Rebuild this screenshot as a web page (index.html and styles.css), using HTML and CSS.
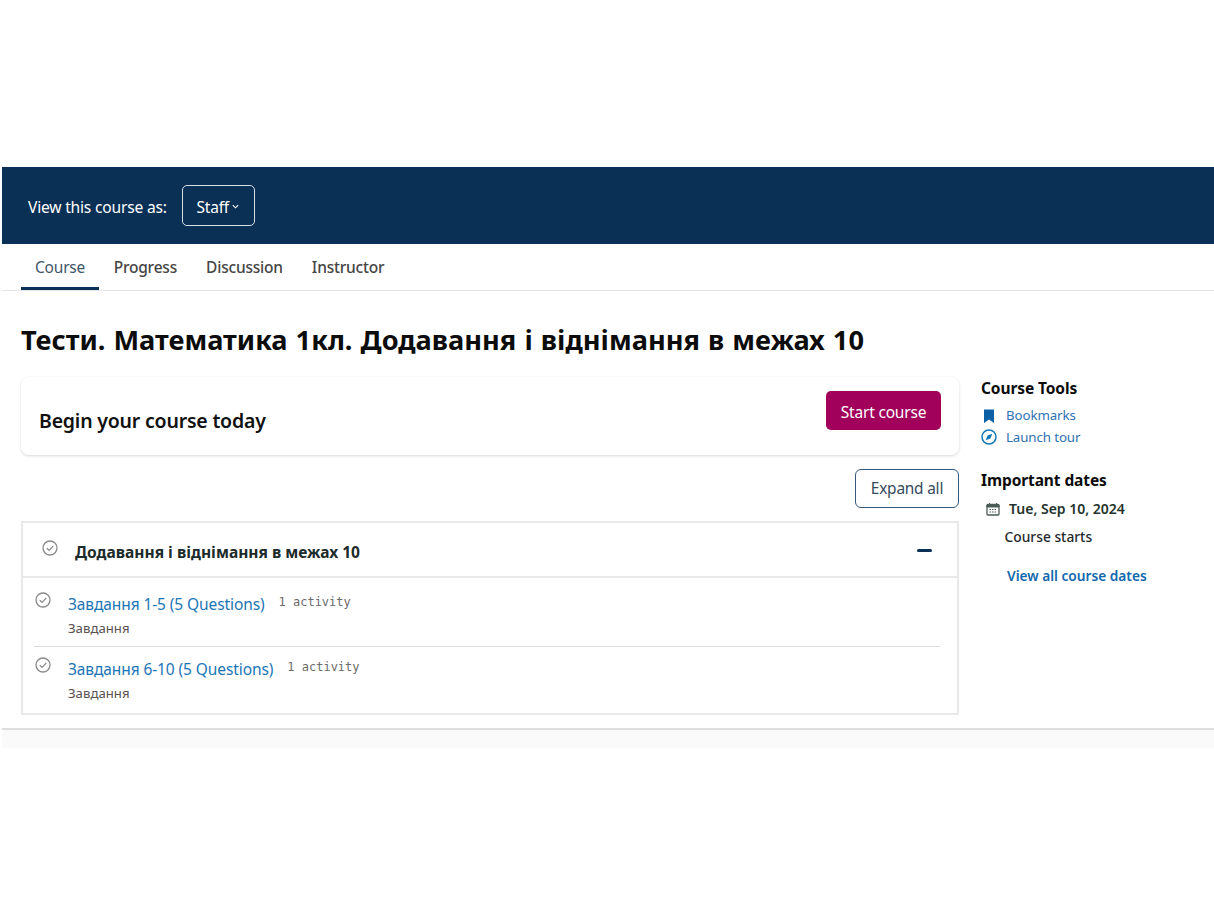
FILE: index.html
```html
<!DOCTYPE html>
<html lang="uk">
<head>
<meta charset="utf-8">
<title>Course</title>
<link rel="stylesheet" href="styles.css">
</head>
<body>
<div class="page">
  <div class="banner">
    <span class="banner-label">View this course as:</span>
    <button class="staff-btn">Staff<svg class="chev" viewBox="0 0 10 10" width="9" height="9"><path d="M2 3.5 5 6.5 8 3.500" fill="none" stroke="#fff" stroke-width="1.2"/></svg></button>
  </div>
  <nav class="tabs">
    <a class="tab active">Course</a>
    <a class="tab">Progress</a>
    <a class="tab">Discussion</a>
    <a class="tab">Instructor</a>
  </nav>
  <main class="content">
    <h1 class="title">Тести. Математика 1кл. Додавання і віднімання в межах 10</h1>
    <div class="columns">
      <div class="main-col">
        <div class="begin-card">
          <h2 class="begin-title">Begin your course today</h2>
          <button class="start-btn">Start course</button>
        </div>
        <div class="expand-row"><button class="expand-btn">Expand all</button></div>
        <section class="outline">
          <header class="section-head">
            <svg class="check check-head" viewBox="0 0 16 16" width="16" height="16"><circle cx="8" cy="8" r="7" fill="none" stroke="#8a8a8a" stroke-width="1.3"/><path d="M4.8 8.2 7.1 10.4 11.3 5.9" fill="none" stroke="#8a8a8a" stroke-width="1.3"/></svg>
            <span class="section-title">Додавання і віднімання в межах 10</span>
            <span class="minus"></span>
          </header>
          <ul class="units">
            <li class="unit">
              <svg class="check" viewBox="0 0 16 16" width="16" height="16"><circle cx="8" cy="8" r="7" fill="none" stroke="#8a8a8a" stroke-width="1.3"/><path d="M4.8 8.2 7.1 10.4 11.3 5.9" fill="none" stroke="#8a8a8a" stroke-width="1.3"/></svg>
              <div class="unit-body">
                <div class="unit-line"><a class="unit-link">Завдання 1-5 (5 Questions)</a><span class="count">1 activity</span></div>
                <div class="unit-sub">Завдання</div>
              </div>
            </li>
            <li class="unit">
              <svg class="check" viewBox="0 0 16 16" width="16" height="16"><circle cx="8" cy="8" r="7" fill="none" stroke="#8a8a8a" stroke-width="1.3"/><path d="M4.8 8.2 7.1 10.4 11.3 5.9" fill="none" stroke="#8a8a8a" stroke-width="1.3"/></svg>
              <div class="unit-body">
                <div class="unit-line"><a class="unit-link">Завдання 6-10 (5 Questions)</a><span class="count">1 activity</span></div>
                <div class="unit-sub">Завдання</div>
              </div>
            </li>
          </ul>
        </section>
      </div>
      <aside class="side">
        <h3 class="side-title">Course Tools</h3>
        <a class="tool"><svg class="tool-icon" viewBox="0 0 16 16" width="16" height="16"><path d="M3 1.5h10v13.5L8 11.600 3 15z" fill="#0a5fa5"/></svg>Bookmarks</a>
        <a class="tool"><svg class="tool-icon" viewBox="0 0 16 16" width="16" height="16"><circle cx="8" cy="8" r="7" fill="none" stroke="#1277b5" stroke-width="1.5"/><path d="M11.3 4.7 9.4 9.4 4.7 11.3 6.6 6.6z" fill="#1277b5"/></svg>Launch tour</a>
        <h3 class="side-title dates-title">Important dates</h3>
        <div class="date-row"><svg class="cal" viewBox="0 0 14 14" width="14" height="14"><path d="M2 2.500h10a1 1 0 0 1 1 1v8.500a1 1 0 0 1-1 1H2a1 1 0 0 1-1-1V3.500a1 1 0 0 1 1-1z" fill="none" stroke="#4a5a55" stroke-width="1.3"/><path d="M1 3h12v2H1zM3.500 1v2M10.500 1v2" fill="#4a5a55" stroke="#4a5a55"/><path d="M3.500 7.500h7M3.500 10h7" stroke="#4a5a55" stroke-width="1.200" stroke-dasharray="1.500 1"/></svg><span>Tue, Sep 10, 2024</span></div>
        <div class="date-label">Course starts</div>
        <a class="all-dates">View all course dates</a>
      </aside>
    </div>
  </main>
  <div class="footer-band"></div>
</div>
</body>
</html>
```
FILE: styles.css
```css
* { box-sizing: border-box; }
html, body { margin: 0; background: #fff; }
body { font-family: "Noto Sans", "Open Sans", sans-serif; color: #1a1a1a; }
.page { padding: 167px 0 0 2px; }
.banner {
  height: 77px; background: #0a3055; display: flex; align-items: center;
  padding-left: 26px; color: #fff;
}
.banner-label { font-size: 15.600px; letter-spacing: -0.2px; padding-top: 2px; }
.staff-btn {
  margin-left: 15px; width: 73px; height: 41px; border: 1px solid #d8dfe6; border-radius: 5px;
  background: transparent; color: #fff; font: inherit; font-size: 15.500px; letter-spacing: -0.2px;
  display: flex; align-items: center; justify-content: center; padding: 2px 0 0;
}
.chev { margin-left: 2px; }
.tabs {
  height: 47px; display: flex; padding-left: 19px;
  border-bottom: 1px solid #e6e6e6;
}
.tab {
  font-size: 15.500px; color: #454545; padding: 12px 14.500px 0; height: 46px;
  letter-spacing: -0.2px; font-weight: 500;
}
.tab.active { color: #3f5568; border-bottom: 3px solid #0a3055; font-weight: 400; padding: 12px 14px 0; }
.content { padding: 0 0 13px 19px; }
.title { font-size: 27.200px; word-spacing: 1px; font-weight: 700; color: #0c0c0c; margin: 30px 0 18px; line-height: 38px; }
.columns { display: flex; }
.main-col { width: 938px; }
.begin-card {
  height: 78px; border-radius: 8px; background: #fff; box-shadow: 0 1px 3px rgba(0,0,0,.16);
  display: flex; justify-content: space-between; padding: 14px 18px 0 18px;
}
.begin-title { font-size: 19.500px; font-weight: 600; margin: 16px 0 0; color: #111; letter-spacing: -0.2px; }
.start-btn {
  width: 115px; height: 39px; background: #a1005b; color: #fff; border: 0; border-radius: 5px;
  font: inherit; font-size: 15.500px; letter-spacing: -0.2px; padding: 2px 0 0;
}
.expand-row { display: flex; justify-content: flex-end; margin-top: 14px; }
.expand-btn {
  width: 104px; height: 39px; background: #fff; border: 1px solid #35587c; border-radius: 6px;
  color: #34495c; font: inherit; font-size: 15.400px; letter-spacing: -0.2px; padding: 0;
}
.outline { margin-top: 13px; border: 2px solid #e9e9e9; }
.section-head { height: 55px; display: flex; align-items: center; padding-left: 19px; border-bottom: 2px solid #e9e9e9; position: relative; }
.check-head { margin-top: -4px; }
.section-title { margin: 4px 0 0 17px; font-size: 15.550px; font-weight: 700; color: #1b2a2a; }
.minus { position: absolute; right: 25px; top: 26px; width: 15px; height: 3px; background: #0a3055; border-radius: 2px; }
.units { list-style: none; margin: 0; padding: 0 17px 0 11px; }
.unit { height: 67px; display: flex; border-top: 1px solid #dcdcdc; padding-top: 10px; }
.unit:first-child { border-top: 0; height: 68px; padding-top: 14px; }
.check { flex: none; }
.unit .check { margin-left: 1px; }
.unit-body { margin-left: 17px; margin-top: 1px; }
.unit-line { display: flex; }
.unit-link { font-size: 15.500px; color: #1c75b5; line-height: 22px; letter-spacing: -0.1px; }
.count { font-family: "DejaVu Sans Mono", monospace; font-size: 12px; color: #6b6b6b; margin: 1px 0 0 14px; line-height: 16px; }
.unit-sub { font-size: 13.200px; color: #5a5250; line-height: 24px; margin-top: 1px; }
.side { margin-left: 22px; }
.side-title { font-size: 15.500px; font-weight: 700; color: #0d0d0d; margin: 0; line-height: 22px; letter-spacing: -0.1px; }
.tool { display: flex; align-items: center; font-size: 13.300px; letter-spacing: -0.1px; color: #2f72b3; line-height: 21.500px; }
.side-title + .tool { margin-top: 6px; }
.tool-icon { margin-right: 9px; }
.dates-title { margin-top: 21px; }
.date-row { display: flex; align-items: center; font-size: 14px; font-weight: 600; color: #24332c; margin-top: 6.500px; padding-left: 5px; line-height: 22px; }
.cal { margin-right: 9px; }
.date-label { font-size: 13.800px; font-weight: 500; color: #24292c; margin: 6.500px 0 0 23.500px; line-height: 22px; }
.all-dates { display: block; font-size: 13.700px; font-weight: 600; color: #1268ad; margin: 17px 0 0 26px; line-height: 22px; }
.footer-band { height: 20px; border-top: 2px solid #dedede; background: #fafafa; }
```
